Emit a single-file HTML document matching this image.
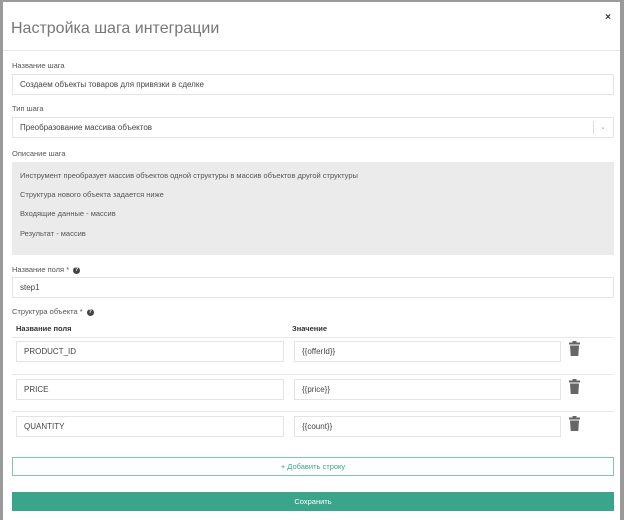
<!DOCTYPE html><html><head><meta charset="utf-8"><style>
*{box-sizing:border-box;margin:0;padding:0}
body{width:624px;height:520px;background:#9a9a9a;font-family:"Liberation Sans",sans-serif;position:relative;overflow:hidden}
.m{position:absolute;left:3px;top:2px;width:617px;height:518px;background:#fff}
.a{position:absolute}
.t{left:8px;top:18px;font-size:16px;color:#777}
.hr{left:0;width:617px;height:1px;background:#e8e8e8}
.l{font-size:7.5px;color:#555}
.in{border:1px solid #e4e4e4;background:#fff;font-size:8px;color:#444;padding-left:7px;display:flex;align-items:center}
.q{display:inline-block;width:7px;height:7px;border-radius:50%;background:#444;color:#fff;font-size:5.5px;text-align:center;line-height:7px;font-weight:bold;margin-left:4px;vertical-align:middle}
.d{font-size:7.5px;color:#555}
.tr{width:11px;height:15px}
</style></head><body><div class="m">
<div class="a t">Настройка шага интеграции</div>
<div class="a" style="right:9px;top:10px;font-size:10px;font-weight:bold;color:#333">×</div>
<div class="a hr" style="top:48px"></div>
<div class="a l" style="left:9px;top:59px">Название шага</div>
<div class="a in" style="left:9px;top:72px;width:602px;height:21px">Создаем объекты товаров для привязки в сделке</div>
<div class="a l" style="left:9px;top:102px">Тип шага</div>
<div class="a in" style="left:9px;top:115px;width:602px;height:21px">Преобразование массива объектов</div>
<div class="a" style="left:590px;top:119px;width:1px;height:13px;background:#ddd"></div>
<div class="a" style="left:597px;top:121px;font-size:7px;color:#aaa">⌄</div>
<div class="a l" style="left:9px;top:147px">Описание шага</div>
<div class="a" style="left:9px;top:160px;width:602px;height:93px;background:#ebebeb"></div>
<div class="a d" style="left:17px;top:169px">Инструмент преобразует массив объектов одной структуры в массив объектов другой структуры</div>
<div class="a d" style="left:17px;top:188px">Структура нового объекта задается ниже</div>
<div class="a d" style="left:17px;top:207px">Входящие данные - массив</div>
<div class="a d" style="left:17px;top:227px">Результат - массив</div>
<div class="a l" style="left:9px;top:263px">Название поля *<span class="q">?</span></div>
<div class="a in" style="left:9px;top:275px;width:602px;height:21px">step1</div>
<div class="a l" style="left:9px;top:305px">Структура объекта *<span class="q">?</span></div>
<div class="a" style="left:13px;top:322px;font-size:7.5px;font-weight:bold;color:#333">Название поля</div>
<div class="a" style="left:289px;top:322px;font-size:7.5px;font-weight:bold;color:#333">Значение</div>
<div class="a hr" style="top:335px;left:9px;width:602px"></div>
<div class="a in" style="left:13px;top:339px;width:268px;height:21px">PRODUCT_ID</div>
<div class="a in" style="left:291px;top:339px;width:267px;height:21px">{{offerId}}</div>
<div class="a hr" style="top:372px;left:9px;width:602px"></div>
<div class="a in" style="left:13px;top:377px;width:268px;height:21px">PRICE</div>
<div class="a in" style="left:291px;top:377px;width:267px;height:21px">{{price}}</div>
<div class="a hr" style="top:409px;left:9px;width:602px"></div>
<div class="a in" style="left:13px;top:414px;width:268px;height:21px">QUANTITY</div>
<div class="a in" style="left:291px;top:414px;width:267px;height:21px">{{count}}</div>
<svg class="a tr" style="left:566px;top:339px" viewBox="0 0 11 15"><rect x="0" y="1.5" width="11" height="2" fill="#666"/><rect x="3.5" y="0" width="4" height="2" fill="#666"/><path d="M1 4.5h9l-.7 10.5H1.7z" fill="#666"/></svg>
<svg class="a tr" style="left:566px;top:377px" viewBox="0 0 11 15"><rect x="0" y="1.5" width="11" height="2" fill="#666"/><rect x="3.5" y="0" width="4" height="2" fill="#666"/><path d="M1 4.5h9l-.7 10.5H1.7z" fill="#666"/></svg>
<svg class="a tr" style="left:566px;top:414px" viewBox="0 0 11 15"><rect x="0" y="1.5" width="11" height="2" fill="#666"/><rect x="3.5" y="0" width="4" height="2" fill="#666"/><path d="M1 4.5h9l-.7 10.5H1.7z" fill="#666"/></svg>
<div class="a" style="left:9px;top:455px;width:602px;height:19px;border:1px solid #7cc7b2;display:flex;align-items:center;justify-content:center;font-size:7.5px;color:#3aa58a">+ Добавить строку</div>
<div class="a" style="left:9px;top:490px;width:602px;height:19px;background:#3aa58a;display:flex;align-items:center;justify-content:center;font-size:7.5px;color:#fff">Сохранить</div>
</div></body></html>
